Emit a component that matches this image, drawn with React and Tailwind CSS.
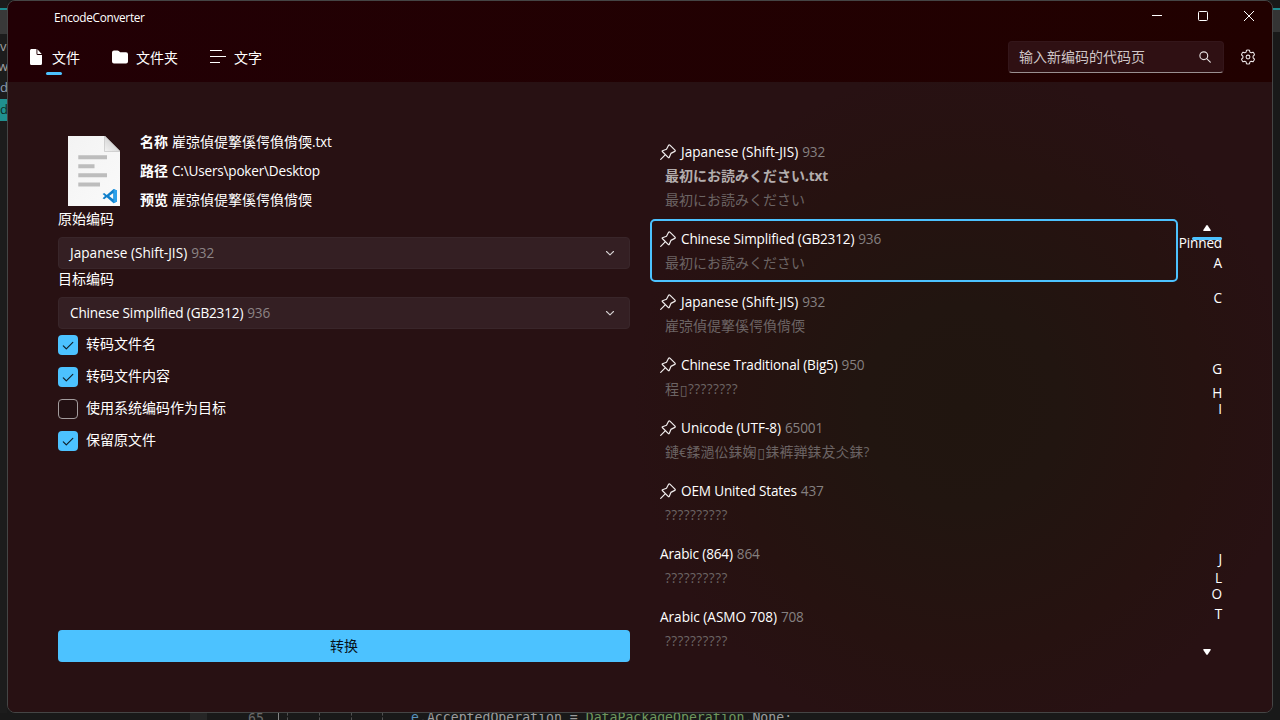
import React from 'react';

const mojibake = '嵟弶偵偍撉傒偔偩偝偄';
const readme = '最初にお読みください';

const tofu = '▯';

const encodings = [
  { pinned: true, name: 'Japanese (Shift-JIS)', code: '932', file: readme, preview: readme, jp: true },
  { pinned: true, name: 'Chinese Simplified (GB2312)', code: '936', preview: readme, selected: true, jp: true },
  { pinned: true, name: 'Japanese (Shift-JIS)', code: '932', preview: mojibake },
  { pinned: true, name: 'Chinese Traditional (Big5)', code: '950', preview: '程' + tofu + '????????' },
  { pinned: true, name: 'Unicode (UTF-8)', code: '65001', preview: '鏈€鍒濄伀銇婅' + tofu + '銇裤亸銇犮仌銇?' },
  { pinned: true, name: 'OEM United States', code: '437', preview: '??????????' },
  { name: 'Arabic (864)', code: '864', preview: '??????????' },
  { name: 'Arabic (ASMO 708)', code: '708', preview: '??????????' },
];

const nameTracking = {
  'Japanese (Shift-JIS)': 'tracking-[0.03px]',
  'Unicode (UTF-8)': 'tracking-[-0.03px]',
  'Arabic (ASMO 708)': 'tracking-[-0.02px]',
};

const letters = [
  ['Pinned', 'mt-[2px]'],
  ['A', 'mt-1'],
  ['C', 'mt-[19px]'],
  ['G', 'mt-[55px]'],
  ['H', 'mt-2'],
  ['I', 'mt-0'],
  ['J', 'mt-[134px]'],
  ['L', 'mt-[3px]'],
  ['O', 'mt-0'],
  ['T', 'mt-1'],
];

function Latin({ children, className = '', tracking = 'tracking-[-0.17px]' }) {
  return <span className={`font-['Open_Sans','Noto_Sans',sans-serif] text-[13.6px] ${tracking} ${className}`}>{children}</span>;
}

function Pin() {
  return (
    <svg className="mr-[5px] size-4 shrink-0" viewBox="0 0 16 16" fill="none" stroke="#f1eded" strokeWidth="1.2" strokeLinejoin="round" strokeLinecap="round">
      <path d="M9.9 1.1 15 6.2q.6.7-.2 1.2l-3.9 2-1.7 4.1q-.3.5-.8.1L2.3 7.5q-.4-.5.2-.8l4-1.4L8.6 1.3q.6-.8 1.3-.2ZM5.2 10.8.7 15.3" />
    </svg>
  );
}

function Preview({ text }) {
  return text.split('').map((ch, i) => {
    if (ch === tofu)
      return <span key={i} className="inline-flex h-[13px] w-[9px] items-center justify-center align-[-1px] font-['DejaVu_Sans',sans-serif] text-[14px] leading-none">{ch}</span>;
    if (ch === '?')
      return <span key={i} className="inline-block w-[6.27px] font-['Open_Sans',sans-serif] text-[13.6px]">{ch}</span>;
    if (ch === '€')
      return <span key={i} className="inline-block w-[7.5px] font-['Open_Sans',sans-serif] text-[13.2px]">{ch}</span>;
    return <span key={i}>{ch}</span>;
  });
}

function Encoding({ item }) {
  return (
    <div className={`relative flex shrink-0 flex-col pl-[10px] pt-2 leading-6 ${item.file ? 'h-[87px]' : 'h-[63px]'}`}>
      {item.selected && <div className="absolute inset-0 rounded-[5px] border-2 border-[#4cc2ff]" />}
      <div className="flex h-6 items-center">
        {item.pinned && <Pin />}
        <Latin className="text-white" tracking={nameTracking[item.name]}>{item.name}</Latin>
        <Latin className="ml-1 text-[#858080]">{item.code}</Latin>
      </div>
      {item.file && (
        <div className="h-6 pl-[5px] font-['Noto_Sans_CJK_JP',sans-serif] font-bold leading-[22px] text-[#b3adad]">
          {item.file}<Latin className="font-bold">.txt</Latin>
        </div>
      )}
      <div className={`h-6 pl-[5px] leading-[22px] text-[#6c6464] ${item.jp ? "font-['Noto_Sans_CJK_JP',sans-serif]" : ''}`}>
        <Preview text={item.preview} />
      </div>
    </div>
  );
}

function Combo({ name, code }) {
  return (
    <div className="flex h-8 shrink-0 items-center rounded-[4px] border border-[#39262a] bg-[#341f23] pl-[11px] pr-[13px]">
      <Latin className="text-white" tracking={nameTracking[name]}>{name}</Latin>
      <Latin className="ml-1 text-[#8c8485]">{code}</Latin>
      <svg className="ml-auto h-3 w-3" viewBox="0 0 12 12" fill="none" stroke="#d3cecf" strokeWidth="1.1" strokeLinecap="round" strokeLinejoin="round">
        <path d="m2.5 4.5 3.5 3.4 3.5-3.4" />
      </svg>
    </div>
  );
}

function Check({ checked, label }) {
  return (
    <div className="flex h-8 shrink-0 items-center">
      <span className={`flex size-5 items-center justify-center rounded-[4px] ${checked ? 'bg-[#4cc2ff]' : 'border border-[#a39c9d] bg-[#221012]'}`}>
        {checked && (
          <svg className="size-3" viewBox="0 0 12 12" fill="none" stroke="#10202a" strokeWidth="1.2" strokeLinecap="round" strokeLinejoin="round">
            <path d="m1.3 6.8 3 3L10.8 3.3" />
          </svg>
        )}
      </span>
      <span className="mb-1 ml-2 leading-5">{label}</span>
    </div>
  );
}

function FileThumb() {
  return (
    <svg className="ml-[10px] mt-1 h-[70px] w-[52px] shrink-0" viewBox="0 0 52 70">
      <defs>
        <linearGradient id="page" x1="0" y1="0" x2="1" y2="1">
          <stop offset="0" stopColor="#f3f3f3" />
          <stop offset="1" stopColor="#fafafa" />
        </linearGradient>
        <linearGradient id="fold" x1="0" y1="1" x2=".6" y2=".3">
          <stop offset="0" stopColor="#f4f4f4" />
          <stop offset="1" stopColor="#d2d2d2" />
        </linearGradient>
      </defs>
      <path d="M0 0H37L52 15V70H0Z" fill="url(#page)" />
      <path d="M36.5 0 52 15.5H36.5Z" fill="url(#fold)" stroke="#c3c3c3" strokeWidth=".7" />
      <path d="M10.3 21.3H39M10.3 30.2H26.5M10.3 39.3H39M10.3 48.4H32" stroke="#bdbdbd" strokeWidth="4" />
      <path d="M45.6 53 49 54.6V65.5L45.6 67.2 38.7 61.2 36.2 63.2 34.6 62.3 37 60.1 34.6 57.9 36.2 57 38.7 59Z" fill="#0f7fcb" />
      <path d="M45.3 57 41.2 60.1 45.3 63.2Z" fill="#fafafa" />
      <path d="M45.6 53 49 54.6V65.5L45.6 67.2Z" fill="#2ba0ea" />
    </svg>
  );
}

export default function App() {
  return (
    <div className="flex h-[720px] w-[1280px] flex-col overflow-hidden bg-[#191919] font-['Noto_Sans_CJK_SC',sans-serif] text-[14px] text-white">
      <div className="flex h-[713px] shrink-0">
        <div className="flex w-[7px] shrink-0 flex-col overflow-hidden bg-[#1c1c1c] font-['Open_Sans',sans-serif] text-[13px] text-[#a0a0a0]">
          <div className="mt-2 h-[2px] shrink-0 bg-[#1e8c90]" />
          <div className="h-6 shrink-0 bg-[#393939]" />
          <div className="mt-[2px] flex h-[22px] shrink-0 items-center">ve</div>
          <div className="-ml-[2px] flex h-[18px] shrink-0 items-center">wl</div>
          <div className="flex h-[23px] shrink-0 items-center text-[#8f9fb4]">d</div>
          <div className="flex h-[22px] shrink-0 items-center bg-[#209090] text-[#0c2b26]">d</div>
        </div>

        <div className="flex w-[1266px] shrink-0 flex-col overflow-hidden rounded-[8px] border border-[#454545] bg-[#281113]">
          <header className="h-[81px] shrink-0 bg-linear-to-r from-[#220005] to-[#210100]">
            <div className="flex h-8 items-start">
              <span className="ml-[46px] mt-2 font-['Open_Sans',sans-serif] text-[11.8px] leading-4 tracking-[-0.3px]">EncodeConverter</span>
              <div className="ml-auto mr-[17px] mt-[9px] flex gap-[34px]">
                <svg className="size-3" viewBox="0 0 12 12"><path d="M1 5.5H11" stroke="#fff" /></svg>
                <svg className="size-3" viewBox="0 0 12 12"><rect x="1.5" y="1.5" width="9" height="9" rx="1" fill="none" stroke="#fff" /></svg>
                <svg className="size-3" viewBox="0 0 12 12"><path d="m1 1 10 10M11 1 1 11" stroke="#fff" /></svg>
              </div>
            </div>
            <nav className="flex h-[47px] items-center">
              <div className="relative ml-[22px] flex h-full w-[81px] items-center">
                <svg className="h-4 w-3" viewBox="0 0 13 16" preserveAspectRatio="none" fill="#fff"><path d="M1.5 0H7v4.5Q7 6 8.5 6H13v8.5q0 1.5-1.5 1.5h-10Q0 16 0 14.5V1.5Q0 0 1.5 0ZM8 .3V4.5q0 .5.5.5h4.2Z" /></svg>
                <span className="ml-[10px] leading-5">文件</span>
                <span className="absolute left-4 top-[39px] h-[3px] w-4 rounded-full bg-[#4cc2ff]" />
              </div>
              <div className="ml-[1px] flex w-[98px] items-center">
                <svg className="h-[14px] w-4" viewBox="0 0 16 14" fill="#fff"><path d="M2 .5h3.5q.8 0 1.3.5l1.4 1.3H14q2 0 2 2V11.5q0 2-2 2H2q-2 0-2-2V2.5q0-2 2-2Z" /></svg>
                <span className="ml-2 leading-5">文件夹</span>
              </div>
              <div className="flex items-center">
                <svg className="size-4" viewBox="0 0 16 16" fill="none" stroke="#fff"><path d="M0 1.5H12M0 7.5H16M0 13.5H10" /></svg>
                <span className="ml-2 leading-5">文字</span>
              </div>
              <div className="ml-auto flex h-8 w-[216px] items-center rounded-[4px] border border-b-[#9a8f90] border-[#34161a] bg-[#2f1013] pl-[10px] pr-[12px] text-[#cfc6c7]">
                <span className="-mt-px leading-5">输入新编码的代码页</span>
                <svg className="ml-auto size-3" viewBox="0 0 12 12" fill="none" stroke="#e6e0e0" strokeWidth="1.15" strokeLinecap="round"><circle cx="4.8" cy="4.7" r="3.9" /><path d="m7.7 7.6 3.6 3.6" /></svg>
              </div>
              <svg className="ml-4 mr-4 size-4" viewBox="0 0 16 16" fill="none" stroke="#efe9e9" strokeWidth="1.05" strokeLinejoin="round">
                <path d="M6.5 1.2Q8 .9 9.5 1.2L9.9 3.1 11.2 3.8 13 3.2Q14.1 4.3 14.5 5.8L13.1 7.2V8.8L14.5 10.2Q14.1 11.7 13 12.8L11.2 12.2 9.9 12.9 9.5 14.8Q8 15.1 6.5 14.8L6.1 12.9 4.8 12.2 3 12.8Q1.9 11.7 1.5 10.2L2.9 8.8V7.2L1.5 5.8Q1.9 4.3 3 3.2L4.8 3.8 6.1 3.1Z" />
                <circle cx="8" cy="8" r="1.9" />
              </svg>
            </nav>
          </header>

          <main className="flex flex-1 bg-[radial-gradient(ellipse_330px_340px_at_955px_325px,#20150f_0%,#211510_30%,#261210_72%,#281113_100%)] pl-[50px] pt-[50px]">
            <section className="flex h-[530px] w-[572px] shrink-0 flex-col">
              <div className="flex h-[78px] shrink-0">
                <FileThumb />
                <div className="-mt-px ml-5 flex flex-col gap-[9px] leading-5">
                  <div className="h-5"><b>名称</b><span className="ml-1">{mojibake}<Latin>.txt</Latin></span></div>
                  <div className="h-5"><b>路径</b><Latin className="ml-1" tracking="tracking-[-0.21px]">C:\Users\poker\Desktop</Latin></div>
                  <div className="h-5"><b>预览</b><span className="ml-1">{mojibake}</span></div>
                </div>
              </div>
              <div className="mb-[9px] h-[18px] shrink-0 leading-4">原始编码</div>
              <Combo name="Japanese (Shift-JIS)" code="932" />
              <div className="mb-[9px] mt-[1px] h-[18px] shrink-0 leading-4">目标编码</div>
              <Combo name="Chinese Simplified (GB2312)" code="936" />
              <Check checked label="转码文件名" />
              <Check checked label="转码文件内容" />
              <Check label="使用系统编码作为目标" />
              <Check checked label="保留原文件" />
              <button className="mt-auto h-8 shrink-0 rounded-[4px] bg-[#4cc2ff] pb-[2px] leading-5 text-[#081018]">转换</button>
            </section>

            <section className="ml-5 flex h-[530px] w-[528px] shrink-0 flex-col">
              {encodings.map((item, i) => <Encoding key={i} item={item} />)}
            </section>

            <aside className="flex w-[44px] shrink-0 flex-col items-end pt-[92px]">
              <svg className="mr-[11px] h-2 w-2" viewBox="0 0 8 8"><path d="M3.3 1.5q.7-.9 1.4 0L7.7 6q.4 1-.5 1H.8Q-.1 7 .3 6Z" fill="#fff" /></svg>
              {letters.map(([label, gap]) => (
                <div key={label} className={`relative h-4 whitespace-nowrap leading-4 ${gap}`}>
                  <Latin>{label}</Latin>
                  {label === 'Pinned' && <span className="absolute right-0 top-[3px] h-[3px] w-[30px] rounded-full bg-[#4cc2ff]" />}
                </div>
              ))}
              <svg className="mr-[11px] mt-[27px] h-2 w-2" viewBox="0 0 8 8"><path d="M3.3 6.5q.7.9 1.4 0L7.7 2q.4-1-.5-1H.8Q-.1 1 .3 2Z" fill="#fff" /></svg>
            </aside>
          </main>
        </div>

        <div className="w-[7px] shrink-0 bg-[#191919]">
          <div className="mt-2 h-[2px] bg-[#1e8c90]" />
          <div className="h-[22px] bg-[#343434]" />
        </div>
      </div>

      <div className="flex h-[7px] shrink-0 overflow-hidden whitespace-pre font-['DejaVu_Sans_Mono',monospace] text-[13.2px] leading-4">
        <div className="ml-[190px] h-full w-[17px] bg-[#262626]" />
        <div className="-mt-[2px] ml-[41px] w-[30px] text-[#686868]">65</div>
        <div className="h-full w-[9px] border-l border-[#858585]" />
        <div className="h-full w-8 border-l border-dashed border-[#505050]" />
        <div className="h-full w-8 border-l border-dashed border-[#505050]" />
        <div className="h-full w-[31px] border-l border-dashed border-[#505050]" />
        <div className="h-full w-[29px] border-l border-dashed border-[#505050]" />
        <div className="-mt-[3px] text-[#9c9c9c]">
          <span className="text-[#5a91bd]">e</span>.AcceptedOperation = <span className="text-[#6f965c]">DataPackageOperation</span>.None;
        </div>
      </div>
    </div>
  );
}
